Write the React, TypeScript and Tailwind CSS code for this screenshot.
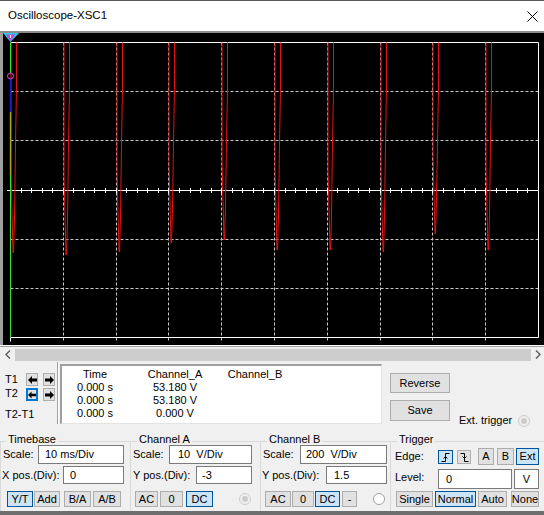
import React from "react";

const btnBase = "flex items-center justify-center border text-[11px] leading-none text-black";
const btnNormal = "bg-[#e1e1e1] border-[#adadad]";
const btnActive = "bg-[#cce4f7] border-[#005499]";

function Btn({ label, active, className }: { label: React.ReactNode; active?: boolean; className: string }) {
  return (
    <button type="button" className={`${btnBase} ${active ? btnActive : btnNormal} ${className}`}>
      {label}
    </button>
  );
}

function Field({ value, className }: { value: string; className: string }) {
  return (
    <div className={`flex items-center bg-white border border-[#7a7a7a] text-[11px] whitespace-pre ${className}`}>
      {value}
    </div>
  );
}

function Radio({ disabled }: { disabled?: boolean }) {
  return (
    <span
      className={`w-[12px] h-[12px] rounded-full border flex items-center justify-center ${
        disabled ? "border-[#cccccc] bg-[#f0f0f0]" : "border-[#a0a0a0] bg-white"
      }`}
    >
      {disabled && <span className="w-[6px] h-[6px] rounded-full bg-[#cccccc]" />}
    </span>
  );
}

function ArrowBtn({ dir, focused }: { dir: "l" | "r"; focused?: boolean }) {
  return (
    <button
      type="button"
      className={`w-[12px] h-[13px] flex items-center justify-center bg-[#e1e1e1] ${
        focused ? "border-2 border-[#0078d7]" : "border border-[#adadad]"
      }`}
    >
      <svg width="9" height="8" viewBox="0 0 9 8">
        <path d={dir === "l" ? "M0 4 L4 0 V2.5 H9 V5.5 H4 V8 Z" : "M9 4 L5 0 V2.5 H0 V5.5 H5 V8 Z"} fill="#000" />
      </svg>
    </button>
  );
}

function EdgeIcon({ rising }: { rising?: boolean }) {
  return (
    <svg width="11" height="12" viewBox="0 0 11 12">
      <path d={rising ? "M1.5 10.5 H5.5 V2.5 H9.5" : "M1.5 2.5 H5.5 V10.5 H9.5"} fill="none" stroke="#000" />
      <path d={rising ? "M3.5 7.5 L5.5 5.5 L7.5 7.5" : "M3.5 5.5 L5.5 7.5 L7.5 5.5"} fill="none" stroke="#000" />
    </svg>
  );
}

function Scope() {
  const XL = 7.5;
  const XR = 535.5;
  const YT = 9.5;
  const YB = 304.5;
  const DX = (XR - XL) / 10;
  const DY = (YB - YT) / 6;
  const snap = (v: number) => Math.floor(v) + 0.5;
  const yc = snap(YT + 3 * DY);
  const vlines = Array.from({ length: 9 }, (_, i) => snap(XL + (i + 1) * DX));
  const hlines = [1, 2, 4, 5].map((j) => snap(YT + j * DY));
  const ticks = Array.from({ length: 51 }, (_, k) => snap(XL + (k * DX) / 5));
  const bottoms = [220, 222, 219, 210, 207, 217, 217, 219, 201, 217];

  return (
    <svg width="541" height="312" className="block bg-black">
      {vlines.map((x) => (
        <line key={`v${x}`} x1={x} y1={YT} x2={x} y2={YB + 4} stroke="#c8c8c8" strokeDasharray="3 2" />
      ))}
      {hlines.map((y) => (
        <line key={`h${y}`} x1={XL} y1={y} x2={XR} y2={y} stroke="#c8c8c8" strokeDasharray="3 2" />
      ))}
      <line x1={4} y1={yc} x2={XR} y2={yc} stroke="#fff" />
      {ticks.map((x, k) => (
        <line key={`t${k}`} x1={x} y1={yc - 2.5} x2={x} y2={yc + 2.5} stroke="#fff" />
      ))}
      <path d={`M${XL} ${YT} H${XR} V${YB} H${XL} V${YB + 4}`} fill="none" stroke="#fff" />

      {/* trace */}
      {bottoms.map((b, i) => {
        const xg = snap(XL + i * DX);
        return (
          <g key={`s${i}`} fill="none" stroke="#e01515" strokeWidth="1">
            <path d={`M${xg + 0.5} ${YT} L${xg + 0.5} ${b - 80} L${xg + 1.5} ${b - 40} L${xg + 2.5} ${b}`} />
            <path d={`M${xg + 6} ${YT} L${xg + 6} 55 L${xg + 5} 110 L${xg + 4} ${b - 35} L${xg + 3} ${b}`} />
          </g>
        );
      })}

      {/* cursor 1 */}
      <line x1={XL} y1={YT} x2={XL} y2={40} stroke="#3cdc3c" />
      <line x1={XL} y1={46} x2={XL} y2={79} stroke="#1c1cc8" strokeWidth="1.4" />
      <line x1={XL} y1={79} x2={XL} y2={142} stroke="#a8a820" strokeWidth="1.4" />
      <line x1={XL} y1={142} x2={XL} y2={YB} stroke="#3cdc3c" />
      <circle cx={XL} cy={43} r={3} fill="none" stroke="#e040e0" />
      <polygon points="0,0 16,0 7.5,9" fill="#20d0e8" />
      <polygon points="3,1.5 12,1.5 7.5,8" fill="#e030e0" />
      <line x1={7.5} y1={2} x2={7.5} y2={5} stroke="#fff" />
    </svg>
  );
}

export default function App() {
  return (
    <div className="w-[544px] h-[515px] overflow-hidden bg-[#f0f0f0] text-black font-['Liberation_Sans',Arial,sans-serif] flex flex-col">
      {/* title bar */}
      <div className="h-[31px] border-t border-[#5a5a5a] bg-white flex items-center justify-between pl-[8px] pr-[5px]">
        <span className="text-[11.5px]">Oscilloscope-XSC1</span>
        <svg width="11" height="11" viewBox="0 0 11 11" className="mr-[1px]">
          <path d="M0.5 0.5 L10.5 10.5 M10.5 0.5 L0.5 10.5" stroke="#000" strokeWidth="1" />
        </svg>
      </div>
      <div className="h-[2px] bg-[#8c8c8c]" />

      {/* scope screen */}
      <div className="flex h-[312px]">
        <div className="w-[3px] bg-[#a0a0a0]" />
        <Scope />
      </div>

      {/* scrollbar */}
      <div className="h-[1px] bg-white" />
      <div className="h-[1px] bg-[#a0a0a0]" />
      <div className="h-[15px] flex items-center">
        <div className="w-[15px] flex justify-center">
          <svg width="6" height="9" viewBox="0 0 6 9">
            <path d="M5 0.5 L1 4.5 L5 8.5" fill="none" stroke="#606060" strokeWidth="1.5" />
          </svg>
        </div>
        <div className="w-[516px] h-[12px] bg-[#cdcdcd]" />
        <div className="w-[13px] flex justify-center">
          <svg width="6" height="9" viewBox="0 0 6 9">
            <path d="M1 0.5 L5 4.5 L1 8.5" fill="none" stroke="#606060" strokeWidth="1.5" />
          </svg>
        </div>
      </div>

      {/* cursors + readout */}
      <div className="h-[66px] flex text-[11px]">
        <div className="w-[58px] h-[62px] border-r border-[#a0a0a0] shadow-[1px_0_0_#ffffff] flex flex-col">
          <div className="mt-[11px] h-[13px] flex items-center">
            <span className="w-[26px] pl-[5px]">T1</span>
            <ArrowBtn dir="l" />
            <span className="w-[5px]" />
            <ArrowBtn dir="r" />
          </div>
          <div className="mt-[2px] h-[13px] flex items-center">
            <span className="w-[26px] pl-[5px] -mt-[2px]">T2</span>
            <ArrowBtn dir="l" focused />
            <span className="w-[5px]" />
            <ArrowBtn dir="r" />
          </div>
          <div className="mt-[7px] h-[13px] flex items-center pl-[5px]">T2-T1</div>
        </div>

        <div className="ml-[2px] mt-[2px] w-[322px] h-[60px] bg-white border-t-2 border-l-2 border-[#a0a0a0] border-r border-b border-r-[#e3e3e3] border-b-[#e3e3e3] pt-[2px] leading-[13px]">
          {[
            ["Time", "Channel_A", "Channel_B"],
            ["0.000 s", "53.180 V", ""],
            ["0.000 s", "53.180 V", ""],
            ["0.000 s", "0.000 V", ""],
          ].map((row, r) => (
            <div key={r} className="flex h-[13px]">
              <span className="w-[66px] text-center">{row[0]}</span>
              <span className="w-[94px] text-center">{row[1]}</span>
              <span className="w-[66px] text-center">{row[2]}</span>
            </div>
          ))}
        </div>

        <div className="ml-[8px] w-[60px] flex flex-col">
          <Btn label="Reverse" className="mt-[11px] h-[20px] w-[60px]" />
          <Btn label="Save" className="mt-[7px] h-[21px] w-[60px]" />
        </div>
        <div className="ml-[9px] self-end mb-[1px] h-[13px] flex items-center">
          <span>Ext. trigger</span>
          <span className="ml-[6px]">
            <Radio disabled />
          </span>
        </div>
      </div>

      {/* control groups */}
      <div className="h-[83px] flex text-[11px]">
        <fieldset className="mt-[7px] h-[76px] w-[130px] border-t border-l border-[#d9d9d9]">
          <legend className="ml-[5px] px-[2px] leading-[8px] pb-[4px]">Timebase</legend>
          <div className="-mt-[2px] h-[19px] flex items-center">
            <span className="w-[37px] pl-[2px]">Scale:</span>
            <Field value="10 ms/Div" className="w-[86px] h-[19px] pl-[6px]" />
          </div>
          <div className="mt-[2px] h-[18px] flex items-center">
            <span className="w-[62px] pl-[1px]">X pos.(Div):</span>
            <Field value="0" className="w-[61px] h-[18px] pl-[6px]" />
          </div>
          <div className="mt-[7px] h-[16px] flex">
            <Btn label="Y/T" active className="ml-[6px] w-[26px]" />
            <Btn label="Add" className="ml-[1px] w-[26px]" />
            <Btn label="B/A" className="ml-[4px] w-[27px]" />
            <Btn label="A/B" className="ml-[2px] w-[28px]" />
          </div>
        </fieldset>

        <fieldset className="mt-[7px] h-[76px] w-[130px] border-t border-l border-[#d9d9d9]">
          <legend className="ml-[6px] px-[2px] leading-[8px] pb-[4px]">Channel A</legend>
          <div className="-mt-[2px] h-[19px] flex items-center">
            <span className="w-[38px] pl-[2px]">Scale:</span>
            <Field value="10  V/Div" className="w-[83px] h-[19px] pl-[8px]" />
          </div>
          <div className="mt-[2px] h-[18px] flex items-center">
            <span className="w-[65px] pl-[2px]">Y pos.(Div):</span>
            <Field value="-3" className="w-[56px] h-[18px] pl-[5px]" />
          </div>
          <div className="mt-[7px] h-[16px] flex items-center">
            <Btn label="AC" className="ml-[4px] w-[23px] h-[16px]" />
            <Btn label="0" className="ml-[2px] w-[23px] h-[16px]" />
            <Btn label="DC" active className="ml-[3px] w-[27px] h-[16px]" />
            <span className="ml-[26px]">
              <Radio disabled />
            </span>
          </div>
        </fieldset>

        <fieldset className="mt-[7px] h-[76px] w-[130px] border-t border-l border-[#d9d9d9]">
          <legend className="ml-[6px] px-[2px] leading-[8px] pb-[4px]">Channel B</legend>
          <div className="-mt-[2px] h-[19px] flex items-center">
            <span className="w-[39px] pl-[2px]">Scale:</span>
            <Field value="200  V/Div" className="w-[87px] h-[19px] pl-[5px]" />
          </div>
          <div className="mt-[2px] h-[18px] flex items-center">
            <span className="w-[65px] pl-[1px]">Y pos.(Div):</span>
            <Field value="1.5" className="w-[61px] h-[18px] pl-[7px]" />
          </div>
          <div className="mt-[7px] h-[16px] flex items-center">
            <Btn label="AC" className="ml-[4px] w-[26px] h-[16px]" />
            <Btn label="0" className="ml-[1px] w-[22px] h-[16px]" />
            <Btn label="DC" active className="ml-[1px] w-[25px] h-[16px]" />
            <Btn label="-" className="ml-[2px] w-[15px] h-[16px]" />
            <span className="ml-[16px]">
              <Radio />
            </span>
          </div>
        </fieldset>

        <fieldset className="mt-[7px] h-[76px] w-[154px] border-t border-l border-[#d9d9d9]">
          <legend className="ml-[6px] px-[2px] leading-[8px] pb-[4px]">Trigger</legend>
          <div className="mt-[1px] h-[17px] flex items-center">
            <span className="w-[47px] pl-[4px]">Edge:</span>
            <Btn label={<EdgeIcon rising />} active className="w-[15px] h-[14px]" />
            <Btn label={<EdgeIcon />} className="ml-[4px] w-[14px] h-[14px]" />
            <Btn label="A" className="ml-[7px] w-[16px] h-[17px]" />
            <Btn label="B" className="ml-[3px] w-[17px] h-[17px]" />
            <Btn label="Ext" active className="ml-[2px] w-[23px] h-[17px]" />
          </div>
          <div className="mt-[4px] h-[20px] flex items-center">
            <span className="w-[47px] pl-[4px] -mt-[4px]">Level:</span>
            <Field value="0" className="w-[74px] h-[20px] pl-[7px]" />
            <Field value="V" className="ml-[2px] w-[25px] h-[20px] justify-center" />
          </div>
          <div className="mt-[2px] h-[16px] flex">
            <Btn label="Single" className="ml-[5px] w-[37px]" />
            <Btn label="Normal" active className="ml-[2px] w-[41px]" />
            <Btn label="Auto" className="ml-[2px] w-[29px]" />
            <Btn label="None" className="ml-[4px] w-[28px]" />
          </div>
        </fieldset>
      </div>

      <div className="h-[4px] bg-[#6e6e6e]" />
    </div>
  );
}
